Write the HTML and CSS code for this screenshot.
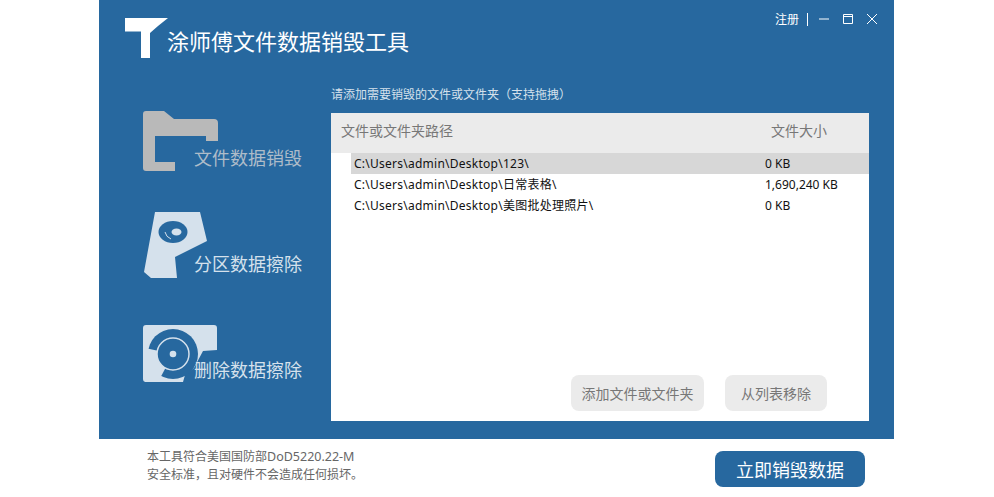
FILE: index.html
```html
<!DOCTYPE html>
<html lang="zh-CN">
<head>
<meta charset="utf-8">
<title>涂师傅文件数据销毁工具</title>
<link rel="stylesheet" href="styles.css">
</head>
<body>
<div class="window">
  <div class="panel">
    <header class="header">
      <div class="brand">
        <svg class="logo" width="43" height="40" viewBox="0 0 43 40"><path fill="#fff" d="M0 0H43L33 8L25 15V40H16V13.500H0Z"/></svg>
        <h1 class="title">涂师傅文件数据销毁工具</h1>
      </div>
      <div class="controls">
        <span class="register">注册</span>
        <span class="sep"></span>
        <svg class="ctl" width="10" height="10" viewBox="0 0 10 10"><path d="M0 5H10" stroke="#fff" stroke-width="1"/></svg>
        <svg class="ctl" width="10" height="10" viewBox="0 0 10 10"><path d="M.5.500H9.500V9.500H.5ZM.5 2.500H9.500" fill="none" stroke="#fff" stroke-width="1"/></svg>
        <svg class="ctl" width="10" height="10" viewBox="0 0 10 10"><path d="M0 0L10 10M10 0L0 10" stroke="#fff" stroke-width="1"/></svg>
      </div>
    </header>
    <div class="body">
      <nav class="sidebar">
        <div class="nav-item nav-file">
          <svg width="75" height="60" viewBox="0 0 75 60"><path fill="#b9b9b9" d="M3 0H21L31 8H71Q75 8 75 12V30H63V25H12V51H32V60H3Q0 60 0 57V3Q0 0 3 0Z"/></svg>
          <span class="nav-label label-grey">文件数据销毁</span>
        </div>
        <div class="nav-item nav-part">
          <svg width="66" height="68" viewBox="0 0 66 68"><path fill="#d5e1ec" d="M12 1H57L64 30L32 46L34 67H8L1 61Z"/><ellipse cx="30" cy="21" rx="14.500" ry="11" fill="#27689f"/><ellipse cx="33.500" cy="21" rx="5" ry="3.500" fill="#d5e1ec"/><path d="M22 21Q23 26 28 28" fill="none" stroke="#d5e1ec" stroke-width="1"/></svg>
          <span class="nav-label">分区数据擦除</span>
        </div>
        <div class="nav-item nav-del">
          <svg width="75" height="60" viewBox="0 0 75 60"><path fill="#d5e1ec" d="M3 0H71Q74 0 74 3V25L60 26L51 43L42 50L40 57H3Q0 57 0 54V3Q0 0 3 0Z"/><circle cx="30" cy="29" r="25" fill="#27689f"/><path fill="#d5e1ec" d="M30 29L2 23V57H15Z"/><circle cx="30" cy="29" r="16" fill="#27689f" stroke="#d5e1ec" stroke-width="1.500"/><circle cx="30" cy="29" r="3.300" fill="#d5e1ec"/></svg>
          <span class="nav-label">删除数据擦除</span>
        </div>
      </nav>
      <main class="main">
        <p class="hint">请添加需要销毁的文件或文件夹（支持拖拽）</p>
        <section class="table">
          <div class="thead">
            <span>文件或文件夹路径</span>
            <span>文件大小</span>
          </div>
          <div class="rows">
            <div class="row row-selected"><span class="path">C:\Users\admin\Desktop\123\</span><span>0 KB</span></div>
            <div class="row"><span class="path">C:\Users\admin\Desktop\日常表格\</span><span>1,690,240 KB</span></div>
            <div class="row"><span class="path">C:\Users\admin\Desktop\美图批处理照片\</span><span>0 KB</span></div>
          </div>
          <div class="actions">
            <button class="btn btn-add">添加文件或文件夹</button>
            <button class="btn btn-remove">从列表移除</button>
          </div>
        </section>
      </main>
    </div>
  </div>
  <footer class="footer">
    <p class="notice">本工具符合美国国防部<span class="latin">DoD5220.22-M</span><br>安全标准，且对硬件不会造成任何损坏。</p>
    <button class="start">立即销毁数据</button>
  </footer>
</div>
</body>
</html>
```

FILE: styles.css
```css
* { box-sizing: border-box; }
html, body { margin: 0; height: 100%; overflow: hidden; background: #fff; }
body { font-family: "Noto Sans", "Noto Sans CJK SC", sans-serif; }
.window { width: 795px; height: 497px; margin-left: 99px; display: flex; flex-direction: column; }
.panel { height: 439px; background: #27689f; display: flex; flex-direction: column; }
.header { height: 78px; display: flex; justify-content: space-between; align-items: flex-start; padding: 12px 17px 0 26px; }
.brand { display: flex; align-items: flex-start; padding-top: 6px; }
.logo { display: block; flex: none; }
.title { margin: 6px 0 0 -1px; font: 400 22px/32px "Noto Sans CJK SC", sans-serif; color: #fff; white-space: nowrap; }
.controls { display: flex; align-items: center; height: 14px; color: #fff; }
.register { font: 12px/14px "Noto Sans CJK SC", sans-serif; }
.sep { width: 1px; height: 13px; background: #fff; margin: 0 11px 0 8px; }
.ctl { display: block; margin-right: 14px; }
.ctl:last-child { margin-right: 0; }
.body { flex: 1; display: flex; min-height: 0; }
.sidebar { width: 232px; flex: none; padding: 33px 0 0 44px; }
.nav-item { position: relative; }
.nav-item svg { display: block; }
.nav-file { height: 100px; }
.nav-part { height: 114px; }
.nav-del { height: 60px; }
.nav-label { position: absolute; left: 51px; font: 18px/24px "Noto Sans CJK SC", sans-serif; color: #d5e1ec; white-space: nowrap; }
.label-grey { color: #aebcc9; }
.nav-file .nav-label { top: 34px; }
.nav-part .nav-label { top: 40px; }
.nav-del .nav-label { top: 32px; }
.main { width: 538px; flex: none; display: flex; flex-direction: column; padding-top: 8px; }
.hint { margin: 0 0 11px; font: 12px/16px "Noto Sans CJK SC", sans-serif; color: #d5e1ec; white-space: nowrap; }
.table { height: 308px; background: #fff; display: flex; flex-direction: column; }
.thead { height: 40px; flex: none; background: #ebebeb; display: grid; grid-template-columns: 430px 1fr; align-items: center; padding: 0 0 7px 10px; font: 14px/20px "Noto Sans CJK SC", sans-serif; color: #777; }
.rows { flex: 1; padding-left: 20px; }
.row { height: 21px; display: grid; grid-template-columns: 411px 1fr; align-items: center; padding-left: 3px; font-size: 12px; line-height: 21px; color: #111; white-space: nowrap; }
.path { letter-spacing: .25px; }
.row-selected { background: #d7d7d7; }
.actions { display: flex; justify-content: flex-end; gap: 21px; padding: 0 42px 10px 0; }
.btn { height: 36px; border: 0; border-radius: 8px; background: #ebebeb; color: #777; font: 14px/20px "Noto Sans CJK SC", sans-serif; padding: 0; }
.btn-add { width: 133px; }
.btn-remove { width: 102px; }
.footer { flex: 1; display: flex; justify-content: space-between; align-items: flex-start; padding: 9px 29px 0 48px; }
.notice { margin: 0; font: 12px/18px "Noto Sans", "Noto Sans CJK SC", sans-serif; color: #666; white-space: nowrap; }
.latin { font-size: 12.500px; }
.start { width: 150px; height: 36px; margin-top: 3px; border: 0; border-radius: 8px; background: #27689f; color: #fff; font: 18px/24px "Noto Sans CJK SC", sans-serif; padding: 0; }
```
